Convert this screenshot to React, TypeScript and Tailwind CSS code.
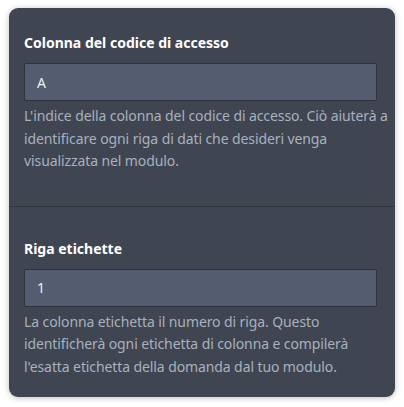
const fields = [
  {
    label: "Colonna del codice di accesso",
    value: "A",
    help: "L'indice della colonna del codice di accesso. Ciò aiuterà a identificare ogni riga di dati che desideri venga visualizzata nel modulo.",
  },
  {
    label: "Riga etichette",
    value: "1",
    help: "La colonna etichetta il numero di riga. Questo identificherà ogni etichetta di colonna e compilerà l'esatta etichetta della domanda dal tuo modulo.",
  },
];

const App = () => {
  return (
    <div
      className="w-[404px] h-[407px] bg-white pt-[8px] px-[9px]"
      style={{ fontFamily: "'Noto Sans', 'Open Sans', sans-serif" }}
    >
      <div className="w-[386px] h-[389px] bg-[#3f4551] rounded-[9px] shadow-[0_1px_6px_rgba(0,0,0,0.25)] overflow-hidden">
        <div className="pl-[15px] pr-[6px] pt-[25px] pb-[33px]">
          <Field {...fields[0]} />
        </div>
        <div className="border-t border-[#30353e] pl-[15px] pr-[6px] pt-[32px]">
          <Field {...fields[1]} />
        </div>
      </div>
    </div>
  );
};

type FieldProps = { label: string; value: string; help: string };

const Field = ({ label, value, help }: FieldProps) => {
  return (
    <div className="flex flex-col">
      <label className="text-[14px] leading-[20px] font-bold text-white">
        {label}
      </label>
      <div className="mt-[10px] mr-[12px] h-[38px] flex items-center bg-[#535d6f] border border-[#2e333b] rounded-[2px] px-[12px] text-[14px] text-[#eef0f3]">
        {value}
      </div>
      <p className="mt-[4px] text-[14px] leading-[22.5px] tracking-[-0.1px] text-[#a9b1bd]">
        {help}
      </p>
    </div>
  );
};

export default App;
